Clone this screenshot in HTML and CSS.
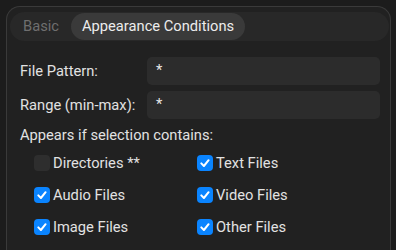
FILE: index.html
```html
<!DOCTYPE html>
<html>
<head>
<meta charset="utf-8">
<link rel="stylesheet" href="styles.css">
</head>
<body>
<div class="panel">
  <div class="tabs">
    <div class="tab">Basic</div>
    <div class="tab active">Appearance Conditions</div>
  </div>
  <div class="form">
    <div class="fields">
      <label class="label">File Pattern:</label>
      <div class="input">*</div>
      <label class="label">Range (min-max):</label>
      <div class="input">*</div>
    </div>
    <div class="heading">Appears if selection contains:</div>
    <div class="checks">
      <div class="check"><span class="box"></span><span>Directories **</span></div>
      <div class="check"><span class="box on"><svg viewBox="0 0 16 16"><path d="M4.3 8.4 L6.9 11 L11.6 5.2"/></svg></span><span>Text Files</span></div>
      <div class="check"><span class="box on"><svg viewBox="0 0 16 16"><path d="M4.3 8.4 L6.9 11 L11.6 5.2"/></svg></span><span>Audio Files</span></div>
      <div class="check"><span class="box on"><svg viewBox="0 0 16 16"><path d="M4.3 8.4 L6.9 11 L11.6 5.2"/></svg></span><span>Video Files</span></div>
      <div class="check"><span class="box on"><svg viewBox="0 0 16 16"><path d="M4.3 8.4 L6.9 11 L11.6 5.2"/></svg></span><span>Image Files</span></div>
      <div class="check"><span class="box on"><svg viewBox="0 0 16 16"><path d="M4.3 8.4 L6.9 11 L11.6 5.2"/></svg></span><span>Other Files</span></div>
    </div>
  </div>
</div>
</body>
</html>
```
FILE: styles.css
```css
html, body {
  margin: 0;
  padding: 0;
  height: 100%;
  background: #1c1c1c;
  font-family: Roboto, "Liberation Sans", sans-serif;
  font-size: 14.7px;
  color: #e2e2e2;
  overflow: hidden;
}
.panel {
  margin: 6px 5px 0 6px;
  height: calc(100% - 6px);
  border: 1px solid #3a3a3a;
  border-bottom: none;
  border-radius: 14px 14px 0 0;
  background: #212121;
  padding: 5px 1px 0 3px;
  box-sizing: border-box;
}
.tabs {
  display: flex;
  height: 29px;
  box-sizing: border-box;
  padding: 1px 2px;
  background: #282828;
  border-radius: 15px;
}
.tab {
  padding: 0 12px 0 11px;
  line-height: 27px;
  color: #6f6f6f;
  border-radius: 14px;
}
.tab.active {
  background: #3a3a3a;
  color: #ececec;
  padding: 0 11px;
}
.form {
  padding: 16px 9px 0 10px;
}
.fields {
  display: grid;
  grid-template-columns: 127px 1fr;
  row-gap: 6px;
  align-items: center;
}
.label {
  line-height: 28px;
}
.input {
  height: 28px;
  line-height: 26px;
  padding: 0 9px;
  background: #2c2c2c;
  border-radius: 5px;
  color: #e6e6e6;
}
.heading {
  margin-top: 6px;
  line-height: 20px;
}
.checks {
  display: grid;
  grid-template-columns: 163px 1fr;
  row-gap: 8px;
  margin-top: 6px;
  padding-left: 14px;
}
.check {
  display: flex;
  align-items: center;
  gap: 3px;
  height: 24px;
}
.box {
  width: 16px;
  height: 16px;
  border-radius: 4px;
  background: #2e2e2e;
  display: flex;
}
.box.on {
  background: #0a84ff;
}
.box svg {
  width: 16px;
  height: 16px;
}
.box path {
  fill: none;
  stroke: #fff;
  stroke-width: 2;
  stroke-linecap: round;
  stroke-linejoin: round;
}
```
